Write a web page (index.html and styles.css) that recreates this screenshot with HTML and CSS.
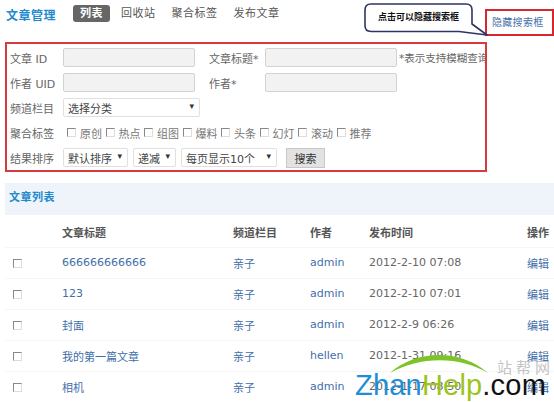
FILE: index.html
```html
<!DOCTYPE html>
<html lang="zh-CN">
<head>
    <meta charset="UTF-8">
    <title>文章管理</title>
    <link rel="stylesheet" href="styles.css">
</head>
<body>
    <div class="page">
        <div class="topbar">
            <span class="module-title">文章管理</span>
            <nav class="tabs">
                <a class="tab active">列表</a>
                <a class="tab">回收站</a>
                <a class="tab">聚合标签</a>
                <a class="tab">发布文章</a>
            </nav>
            <a class="toggle-search">隐藏搜索框</a>

            <!-- annotation bubble -->
            <div class="callout">
                <svg class="callout-shape" width="126" height="34" viewBox="0 0 126 34">
                    <path d="M7 1 H102 Q108 1 108 7 V21 L123 32 L95 28.5 H7 Q1 28.5 1 22.5 V7 Q1 1 7 1 Z"
                          fill="#fff" stroke="#2d3566" stroke-width="1.6" stroke-linejoin="round"/>
                </svg>
                <span class="callout-text">点击可以隐藏搜索框</span>
            </div>
        </div>

        <div class="search-box">
            <div class="form-row">
                <label class="lbl">文章 ID</label>
                <span class="field"></span>
                <label class="lbl lbl-2">文章标题*</label>
                <span class="field"></span>
                <span class="hint">*表示支持模糊查询</span>
            </div>
            <div class="form-row">
                <label class="lbl">作者 UID</label>
                <span class="field"></span>
                <label class="lbl lbl-2">作者*</label>
                <span class="field"></span>
            </div>
            <div class="form-row">
                <label class="lbl">频道栏目</label>
                <span class="select sel-cat">选择分类<i class="caret">▾</i></span>
            </div>
            <div class="form-row">
                <label class="lbl">聚合标签</label>
                <div class="tags">
                    <span class="tag"><i class="cb"></i>原创</span>
                    <span class="tag"><i class="cb"></i>热点</span>
                    <span class="tag"><i class="cb"></i>组图</span>
                    <span class="tag"><i class="cb"></i>爆料</span>
                    <span class="tag"><i class="cb"></i>头条</span>
                    <span class="tag"><i class="cb"></i>幻灯</span>
                    <span class="tag"><i class="cb"></i>滚动</span>
                    <span class="tag"><i class="cb"></i>推荐</span>
                </div>
            </div>
            <div class="form-row">
                <label class="lbl">结果排序</label>
                <span class="select sel-order">默认排序<i class="caret">▾</i></span>
                <span class="select sel-dir">递减<i class="caret">▾</i></span>
                <span class="select sel-page">每页显示10个<i class="caret">▾</i></span>
                <button class="btn-search">搜索</button>
            </div>
        </div>

        <div class="section-head">文章列表</div>

        <table class="list">
            <colgroup>
                <col class="c-check"><col class="c-title"><col class="c-chan"><col class="c-author"><col class="c-time"><col class="c-op">
            </colgroup>
            <thead>
                <tr>
                    <th></th>
                    <th>文章标题</th>
                    <th>频道栏目</th>
                    <th>作者</th>
                    <th>发布时间</th>
                    <th>操作</th>
                </tr>
            </thead>
            <tbody>
                <tr>
                    <td><i class="cb"></i></td>
                    <td><a>666666666666</a></td>
                    <td><a>亲子</a></td>
                    <td><a>admin</a></td>
                    <td class="time">2012-2-10 07:08</td>
                    <td><a>编辑</a></td>
                </tr>
                <tr>
                    <td><i class="cb"></i></td>
                    <td><a>123</a></td>
                    <td><a>亲子</a></td>
                    <td><a>admin</a></td>
                    <td class="time">2012-2-10 07:01</td>
                    <td><a>编辑</a></td>
                </tr>
                <tr>
                    <td><i class="cb"></i></td>
                    <td><a>封面</a></td>
                    <td><a>亲子</a></td>
                    <td><a>admin</a></td>
                    <td class="time">2012-2-9 06:26</td>
                    <td><a>编辑</a></td>
                </tr>
                <tr>
                    <td><i class="cb"></i></td>
                    <td><a>我的第一篇文章</a></td>
                    <td><a>亲子</a></td>
                    <td><a>hellen</a></td>
                    <td class="time">2012-1-31 09:16</td>
                    <td><a>编辑</a></td>
                </tr>
                <tr>
                    <td><i class="cb"></i></td>
                    <td><a>相机</a></td>
                    <td><a>亲子</a></td>
                    <td><a>admin</a></td>
                    <td class="time">2012-1-17 08:50</td>
                    <td><a>编辑</a></td>
                </tr>
            </tbody>
        </table>

        <!-- site watermark -->
        <div class="watermark">
            <svg class="swoosh" width="100" height="24" viewBox="0 0 100 24">
                <path d="M0 21 C 25 -2, 70 -4, 98 21 C 70 4, 30 4, 0 21 Z" fill="#7cc427"/>
            </svg>
            <span class="wm-cn">站帮网</span>
            <span class="wm-en"><span class="wm-zhan">Zhan</span><span class="wm-help">Help</span>.com</span>
        </div>
    </div>
</body>
</html>
```

FILE: styles.css
```css
* {
    margin: 0;
    padding: 0;
    box-sizing: border-box;
}

body {
    font-family: "DejaVu Sans", "Noto Sans CJK SC", sans-serif;
    font-size: 11px;
    color: #555;
    background: #fff;
    width: 554px;
    height: 402px;
    overflow: hidden;
}

.page {
    position: relative;
    height: 402px;
    overflow: hidden;
}

a {
    color: #3f6fa9;
    text-decoration: none;
}

/* top bar */
.topbar {
    position: relative;
    display: flex;
    align-items: flex-start;
    height: 42px;
    padding-left: 6px;
}

.module-title {
    margin-top: 6px;
    font-size: 12px;
    font-weight: bold;
    color: #2189cc;
    letter-spacing: 0.5px;
}

.tabs {
    display: flex;
    margin-left: 17px;
    margin-top: 5px;
}

.tab {
    color: #555;
    font-size: 11px;
    line-height: 17px;
    padding: 0 7px;
    margin-right: 3px;
    letter-spacing: 0.5px;
}

.tab.active {
    background: #666;
    color: #fff;
    font-weight: bold;
    border-radius: 3px;
    margin-right: 4px;
}

.tab + .tab {
    margin-right: 2px;
}

.toggle-search {
    margin-left: auto;
    margin-top: 9px;
    width: 69px;
    height: 27px;
    border: 2px solid #d8262c;
    font-size: 10px;
    line-height: 23px;
    padding-left: 5px;
    color: #3f6fa9;
    letter-spacing: 0.3px;
}

.callout {
    position: absolute;
    left: 364px;
    top: 3px;
    width: 126px;
    height: 34px;
}

.callout-shape {
    position: absolute;
    left: 0;
    top: 0;
}

.callout-text {
    position: absolute;
    left: 0;
    top: 1px;
    width: 109px;
    line-height: 27px;
    text-align: center;
    font-size: 9px;
    font-weight: bold;
    color: #111;
}

/* search box */
.search-box {
    width: 482px;
    height: 130px;
    margin-left: 5px;
    border: 2px solid #d43a3e;
    padding: 1px 0 0 3px;
    overflow: hidden;
    white-space: nowrap;
}

.form-row {
    display: flex;
    align-items: center;
    height: 25px;
}

.lbl {
    width: 53px;
    flex-shrink: 0;
    color: #666;
    font-size: 11px;
}

.lbl-2 {
    margin-left: 14px;
    width: 56px;
}

.field {
    width: 132px;
    height: 19px;
    flex-shrink: 0;
    background: #f2f2f2;
    border: 1px solid #d2d2d2;
    border-radius: 2px;
}

.hint {
    margin-left: 2px;
    color: #666;
    font-size: 10.5px;
}

.select {
    position: relative;
    display: flex;
    align-items: center;
    height: 19px;
    flex-shrink: 0;
    border: 1px solid #e0e0e0;
    border-radius: 2px;
    padding-left: 4px;
    color: #444;
    font-size: 11px;
}

.caret {
    position: absolute;
    right: 5px;
    top: 2px;
    font-style: normal;
    font-size: 9px;
    color: #333;
}

.sel-cat {
    width: 137px;
}

.sel-order {
    width: 65px;
}

.sel-dir {
    width: 43px;
    margin-left: 5px;
}

.sel-page {
    width: 96px;
    margin-left: 5px;
}

.btn-search {
    margin-left: 9px;
    width: 39px;
    height: 20px;
    background: #e2e2e2;
    border: 1px solid #c8c8c8;
    font-family: inherit;
    font-size: 11px;
    color: #333;
}

.tags {
    display: flex;
    margin-left: 4px;
}

.tag {
    display: flex;
    align-items: center;
    width: 38.5px;
    color: #777;
    font-size: 11px;
}

.cb {
    display: inline-block;
    width: 9px;
    height: 9px;
    margin-right: 4px;
    border-top: 1px solid #888;
    border-left: 1px solid #888;
    border-right: 1px solid #ddd;
    border-bottom: 1px solid #ddd;
}

/* list */
.section-head {
    margin: 11px 0 0 5px;
    height: 32px;
    background: #eef4f9;
    padding-left: 4px;
    line-height: 30px;
    font-size: 11px;
    font-weight: bold;
    color: #2189cc;
    letter-spacing: 0.5px;
}

.list {
    margin-left: 5px;
    width: 549px;
    border-collapse: collapse;
    table-layout: fixed;
}

.c-check { width: 57px; }
.c-title { width: 171px; }
.c-chan { width: 77px; }
.c-author { width: 59px; }
.c-time { width: 158px; }
.c-op { width: 27px; }

.list th {
    height: 32px;
    text-align: left;
    font-weight: bold;
    color: #555;
    font-size: 11px;
    white-space: nowrap;
    padding-top: 2px;
}

.list td {
    height: 31px;
    white-space: nowrap;
    border-top: 1px solid #f5f5f5;
    font-size: 11px;
}

.list td:first-child {
    padding-left: 8px;
}

.list td:first-child .cb {
    vertical-align: middle;
}

.list td.time {
    color: #666;
}

/* watermark */
.watermark {
    position: absolute;
    left: 352px;
    top: 346px;
    width: 202px;
    height: 60px;
}

.swoosh {
    position: absolute;
    left: 38px;
    top: 6px;
}

.wm-cn {
    position: absolute;
    left: 145px;
    top: 10px;
    font-family: "Noto Sans CJK SC", sans-serif;
    font-size: 15px;
    letter-spacing: 4px;
    color: #c4c4c4;
}

.wm-en {
    position: absolute;
    left: 3px;
    top: 21px;
    font-family: "Liberation Sans", Arial, sans-serif;
    font-size: 29px;
    line-height: 36px;
    letter-spacing: 0.2px;
    color: #111;
}

.wm-zhan {
    color: #1e8fd6;
}

.wm-help {
    color: #9cc51c;
}
```
